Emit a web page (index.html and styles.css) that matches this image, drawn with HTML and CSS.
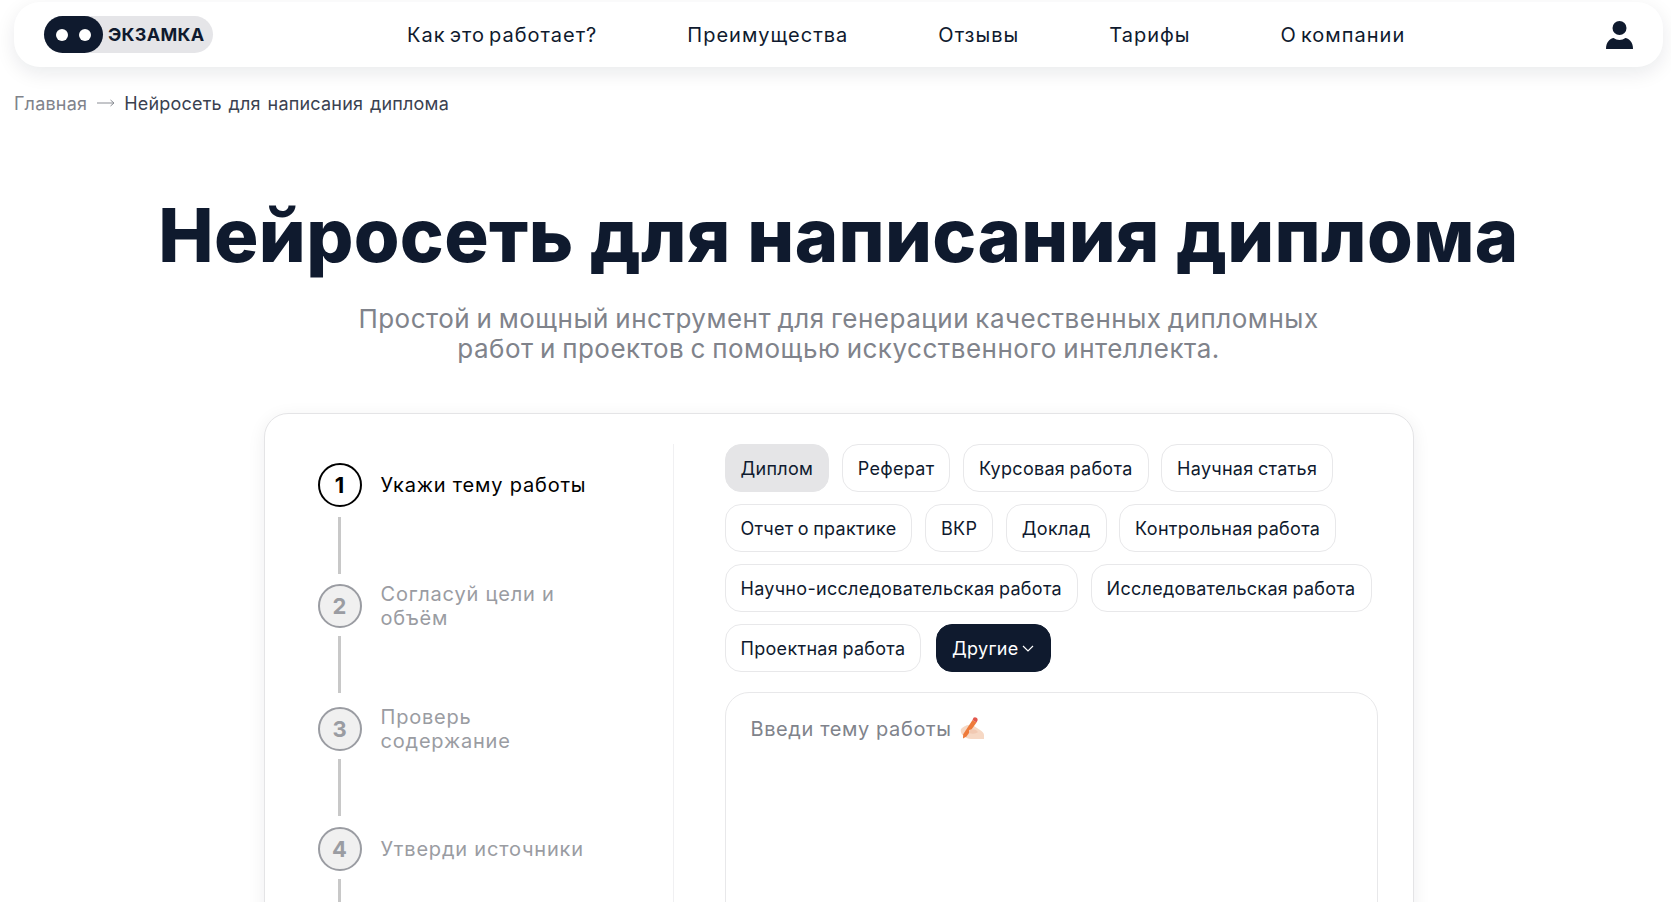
FILE: index.html
```html
<!DOCTYPE html>
<html lang="ru">
<head>
<meta charset="utf-8">
<title>Нейросеть для написания диплома</title>
<link rel="stylesheet" href="styles.css">
</head>
<body>
<div class="page">
  <header class="nav">
    <a class="logo" href="#">
      <span class="logo-eyes"><i></i><i></i></span>
      <span class="logo-text">ЭКЗАМКА</span>
    </a>
    <nav class="links">
      <a href="#">Как это работает?</a>
      <a href="#">Преимущества</a>
      <a href="#">Отзывы</a>
      <a href="#">Тарифы</a>
      <a href="#">О компании</a>
    </nav>
    <svg class="user" viewBox="0 0 27 28" aria-hidden="true">
      <circle cx="13.5" cy="7" r="7"/>
      <path d="M0 28c0-3.5.8-6.6 3-8.6 1.4-1.3 3-2 4.6-2.3 1.7 1.2 3.7 1.9 5.9 1.9s4.200-.7 5.900-1.900c1.600.3 3.200 1 4.600 2.300 2.200 2 3 5.100 3 8.600z"/>
    </svg>
  </header>
  <div class="crumbs">
    <a href="#">Главная</a>
    <svg class="crumb-arrow" viewBox="0 0 18 8" aria-hidden="true"><path d="M0 4h17M13.500 1 17 4l-3.500 3"/></svg>
    <span>Нейросеть для написания диплома</span>
  </div>
  <h1 class="title">Нейросеть для написания диплома</h1>
  <p class="lead">Простой и мощный инструмент для генерации качественных дипломных<br>работ и проектов с помощью искусственного интеллекта.</p>
  <section class="card">
    <ol class="steps">
      <li class="step step-active"><span class="num">1</span><span class="label">Укажи тему работы</span></li>
      <li class="step"><span class="num">2</span><span class="label label-two">Согласуй цели и<br>объём</span></li>
      <li class="step"><span class="num">3</span><span class="label label-two">Проверь<br>содержание</span></li>
      <li class="step"><span class="num">4</span><span class="label">Утверди источники</span></li>
    </ol>
    <div class="form">
      <div class="chips">
        <button class="chip chip-on">Диплом</button>
        <button class="chip">Реферат</button>
        <button class="chip">Курсовая работа</button>
        <button class="chip">Научная статья</button>
        <button class="chip">Отчет о практике</button>
        <button class="chip">ВКР</button>
        <button class="chip">Доклад</button>
        <button class="chip">Контрольная работа</button>
        <button class="chip">Научно-исследовательская работа</button>
        <button class="chip">Исследовательская работа</button>
        <button class="chip">Проектная работа</button>
        <button class="chip chip-dark">Другие<svg class="caret" viewBox="0 0 12 7" aria-hidden="true"><path d="M1 1l5 5 5-5"/></svg></button>
      </div>
      <div class="topic">
        <span class="placeholder">Введи тему работы</span>
        <svg class="hand" viewBox="0 0 24 22" aria-hidden="true">
          <path class="hand-skin" d="M1 12c2-2 5-4 8-4l5 1 6 4c2 1 4 3 4 5v4H11c-3 0-5-1-7-3-2-1-4-4-3-7z"/>
          <path class="hand-pencil" d="M12.500 3l4 2.400L6.500 19.500 3 21.500l.2-4.300z"/>
          <path class="hand-tip" d="M13.500 .800c.8-.8 2-.8 3 0 1 .7 1.400 1.800 1 2.700l-1 1.900-4-2.400z"/>
          <path class="hand-finger" d="M9 13c2-1 5-1 7 0l2 2c-2 2-6 2-9 1z"/>
        </svg>
      </div>
    </div>
  </section>
</div>
</body>
</html>
```
FILE: styles.css
```css
* { box-sizing: border-box; }
html, body { margin: 0; padding: 0; height: 902px; overflow: hidden; background: #fff; }
body { font-family: Inter, "Noto Sans", sans-serif; color: #0f1a2e; }
a { color: inherit; text-decoration: none; }
.page { width: 1677px; padding: 2px 14px 0; }

.nav { height: 65px; display: flex; align-items: center; padding: 0 30px; background: #fff; border-radius: 26px; box-shadow: 0 6px 20px rgba(15, 26, 46, 0.09); }
.logo { display: flex; align-items: center; height: 37px; width: 169px; border-radius: 19px; background: #e5e5e8; }
.logo-eyes { width: 59px; height: 37px; border-radius: 19px; background: #0f1a2e; display: flex; align-items: center; justify-content: center; gap: 11px; }
.logo-eyes i { width: 12px; height: 12px; border-radius: 50%; background: #fff; }
.logo-text { margin-left: 5px; font-size: 18px; font-weight: 700; letter-spacing: 0.3px; }
.links { display: flex; gap: 90px; margin-left: 194px; font-size: 20px; letter-spacing: 1px; word-spacing: -2.5px; }
.user { width: 27px; height: 28px; margin-left: auto; fill: #0f1a2e; }

.crumbs { display: flex; align-items: center; height: 24px; margin-top: 24px; font-size: 18px; letter-spacing: 0.2px; word-spacing: 1.5px; color: #3a4150; }
.crumbs a { color: #80838b; }
.crumb-arrow { width: 18px; height: 8px; margin: 0 9px 0 10px; fill: none; stroke: #8a8d94; stroke-width: 1; }

.title { margin: 77px 0 0; text-align: center; font-size: 74px; line-height: 86px; font-weight: 800; letter-spacing: 0.33px; }
.lead { margin: 26px 0 0; text-align: center; font-size: 26px; line-height: 30px; letter-spacing: 0.5px; word-spacing: -1.5px; color: #80838b; }

.card { display: flex; width: 1150px; height: 600px; margin: 49px auto 0; padding: 30px 33px 0 0; border: 1px solid #e4e4e6; border-radius: 24px; background: #fff; box-shadow: 0 4px 18px rgba(15, 26, 46, 0.07); }

.steps { list-style: none; margin: 0; padding: 19px 0 0 53px; width: 409px; border-right: 1px solid #f0f0f2; flex: none; }
.step { position: relative; display: flex; gap: 19px; height: 121px; color: #9a9ca2; font-size: 20px; line-height: 24px; letter-spacing: 0.8px; }
.step:nth-child(2) { height: 123px; }
.step:nth-child(3) { height: 120px; }
.step::after { content: ""; position: absolute; left: 20px; top: 52px; width: 3px; height: 57px; background: #c8c8c8; }
.step:first-child::after { top: 54px; }
.num { flex: none; width: 44px; height: 44px; border-radius: 50%; border: 2px solid #9a9ca2; background: #f0f0f0; display: flex; align-items: center; justify-content: center; font-size: 22px; font-weight: 700; letter-spacing: 0; }
.label { align-self: flex-start; min-height: 44px; display: flex; align-items: center; }
.label-two { display: block; padding-top: 0; margin-top: -2px; }
.step-active { color: #000; }
.step-active .num { border-color: #000; background: #fff; }

.form { flex: none; width: 653px; margin-left: 51px; }
.chips { display: flex; flex-wrap: wrap; gap: 12px 12.5px; }
.chip { height: 48px; padding: 0 15px; border: 1px solid #e8e8ea; border-radius: 16px; background: #fff; color: #0f1a2e; font: 18px Inter, "Noto Sans", sans-serif; letter-spacing: 0.3px; word-spacing: -1px; }
.chip-on { background: #e5e5e7; border-color: #e5e5e7; }
.chip-dark { background: #0f1a2e; border-color: #0f1a2e; color: #fff; display: flex; align-items: center; gap: 3px; padding-right: 16px; margin-left: 2px; }
.caret { width: 12px; height: 7px; fill: none; stroke: #fff; stroke-width: 1.200; }

.topic { display: flex; align-items: flex-start; gap: 8px; height: 400px; margin-top: 20px; padding: 24px 25px; border: 1px solid #e8e8ea; border-radius: 24px; font-size: 20px; line-height: 24px; letter-spacing: 0.6px; color: #80838b; }
.hand { width: 24px; height: 22px; flex: none; }
.hand-skin { fill: #f6d8c4; }
.hand-pencil { fill: #ee7a3a; }
.hand-tip { fill: #e2574c; }
.hand-finger { fill: #f1c9b2; }
```
